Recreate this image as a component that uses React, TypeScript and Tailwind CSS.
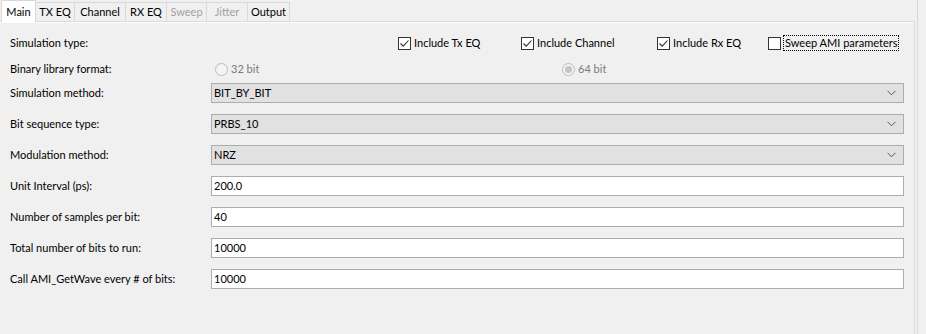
import { ReactNode } from "react";

const tabs = [
  { name: "Main", w: "w-[35px]", active: true },
  { name: "TX EQ", w: "w-[39px]" },
  { name: "Channel", w: "w-[51px]" },
  { name: "RX EQ", w: "w-[41px]" },
  { name: "Sweep", w: "w-[40px]", disabled: true },
  { name: "Jitter", w: "w-[41px]", disabled: true },
  { name: "Output", w: "w-[42px]" },
];

function Check({ checked, label, focus }: { checked?: boolean; label: string; focus?: boolean }) {
  return (
    <div className="flex items-center gap-[3px] whitespace-nowrap">
      <div className="w-[13px] h-[13px] shrink-0 border border-[#333] bg-white flex items-center justify-center">
        {checked && (
          <svg width="11" height="11" viewBox="0 0 11 11">
            <path d="M1.5 5.5 L4.2 8.2 L9.5 2.5" fill="none" stroke="#333" strokeWidth="1.1" />
          </svg>
        )}
      </div>
      <span className={focus ? "outline outline-1 outline-dotted outline-black px-[1px] leading-[14px]" : ""}>
        {label}
      </span>
    </div>
  );
}

function Radio({ checked, label }: { checked?: boolean; label: string }) {
  return (
    <div className="flex items-center gap-[3px] text-[#7a7a82] whitespace-nowrap">
      <div className="w-[13px] h-[13px] shrink-0 rounded-full border border-[#bcbcbc] bg-[#f4f4f4] flex items-center justify-center">
        {checked && <div className="w-[7px] h-[7px] rounded-full bg-[#c4c4c4]" />}
      </div>
      <span>{label}</span>
    </div>
  );
}

function Combo({ value }: { value: string }) {
  return (
    <div className="h-[20px] border border-[#adadad] bg-[#e1e1e1] flex items-center justify-between pl-[2px] pr-[7px]">
      <span>{value}</span>
      <svg width="9" height="6" viewBox="0 0 9 6">
        <path d="M0.5 0.8 L4.5 4.8 L8.5 0.8" fill="none" stroke="#555" strokeWidth="1" />
      </svg>
    </div>
  );
}

function Field({ value }: { value: string }) {
  return (
    <div className="h-[20px] border border-[#abadb3] bg-white flex items-center pl-[2px]">
      <span>{value}</span>
    </div>
  );
}

function Row({ label, children, className = "" }: { label: string; children: ReactNode; className?: string }) {
  return (
    <div className={`grid grid-cols-[201px_1fr] items-center h-[20px] ${className}`}>
      <span className="whitespace-nowrap">{label}</span>
      {children}
    </div>
  );
}

export default function App() {
  return (
    <div
      className="w-[926px] h-[334px] bg-[#f0f0f0] text-[11px] text-black flex overflow-hidden"
      style={{ fontFamily: 'Lato, "Noto Sans", sans-serif' }}
    >
      <div className="w-[915px] flex flex-col">
        {/* Tabs */}
        <div className="flex h-[22px] pl-[1px] relative z-10">
          {tabs.map((t) =>
            t.active ? (
              <div
                key={t.name}
                className={`${t.w} h-[22px] pt-[1px] bg-white border border-b-0 border-[#d9d9d9] flex items-center justify-center`}
              >
                {t.name}
              </div>
            ) : (
              <div
                key={t.name}
                className={`${t.w} h-[19px] mt-[2px] pt-[1px] bg-[#f0f0f0] border border-l-0 border-b-0 border-[#d9d9d9] flex items-center justify-center ${
                  t.disabled ? "text-[#a0a0a0]" : ""
                }`}
              >
                {t.name}
              </div>
            )
          )}
        </div>
        {/* Pane */}
        <div className="-mt-[1px] flex-1 border border-b-0 border-[#d9d9d9] border-l-0 relative">
          <div className="border-t border-white h-full pl-[10px] pr-[10px] pt-[10px]">
            <Row label="Simulation type:">
              <div className="flex items-center pl-[187px]">
                <div className="w-[123px] shrink-0"><Check checked label="Include Tx EQ" /></div>
                <div className="w-[136px] shrink-0"><Check checked label="Include Channel" /></div>
                <div className="w-[111px] shrink-0"><Check checked label="Include Rx EQ" /></div>
                <Check label="Sweep AMI parameters" focus />
              </div>
            </Row>
            <Row label="Binary library format:" className="mt-[6px]">
              <div className="flex items-center pl-[4px]">
                <div className="w-[347px] shrink-0"><Radio label="32 bit" /></div>
                <Radio checked label="64 bit" />
              </div>
            </Row>
            <div className="flex flex-col gap-[11px] mt-[4px]">
              <Row label="Simulation method:"><Combo value="BIT_BY_BIT" /></Row>
              <Row label="Bit sequence type:"><Combo value="PRBS_10" /></Row>
              <Row label="Modulation method:"><Combo value="NRZ" /></Row>
              <Row label="Unit Interval (ps):"><Field value="200.0" /></Row>
              <Row label="Number of samples per bit:"><Field value="40" /></Row>
              <Row label="Total number of bits to run:"><Field value="10000" /></Row>
              <Row label="Call AMI_GetWave every # of bits:"><Field value="10000" /></Row>
            </div>
          </div>
        </div>
      </div>
      <div className="w-[2px]" />
      <div className="w-[1px] bg-[#d9d9d9]" />
    </div>
  );
}
